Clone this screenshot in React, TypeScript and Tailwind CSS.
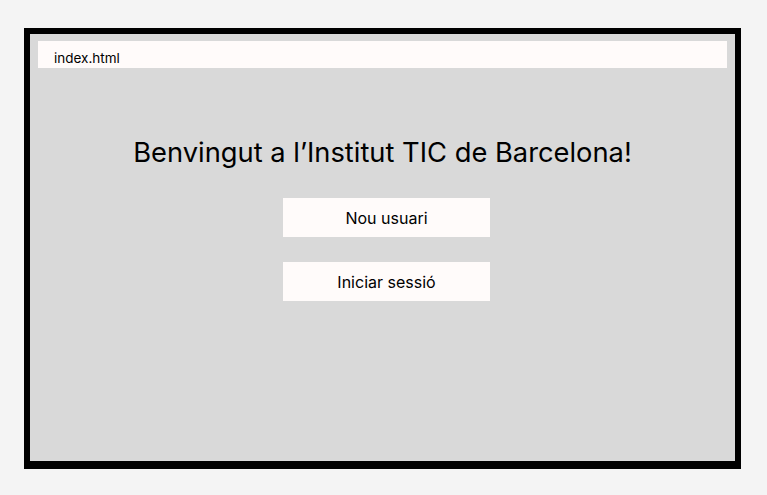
export default function App() {
  return (
    <div
      className="w-[767px] h-[495px] bg-[#f4f4f4] pt-[28px] pl-[24px]"
      style={{ fontFamily: 'Inter, "Liberation Sans", sans-serif' }}
    >
      <div className="w-[717px] h-[441px] border-black border-x-[6px] border-t-[6px] border-b-[8px] bg-[#d9d9d9] flex flex-col">
        <div className="mx-[8px] mt-[7px] h-[27px] bg-[#fffbfa] pl-[16px] pt-[9px] text-[13.5px] leading-[16px] text-black">
          index.html
        </div>
        <h1 className="mt-[67px] text-center text-[27.3px] leading-[36px] text-black">
          Benvingut a l&rsquo;Institut TIC de Barcelona!
        </h1>
        <div className="mt-[27px] flex flex-col items-center gap-[25px] pl-[8px]">
          <button className="w-[207px] h-[39px] bg-[#fffbfa] text-[16px] text-black">
            Nou usuari
          </button>
          <button className="w-[207px] h-[39px] bg-[#fffbfa] text-[16px] text-black">
            Iniciar sessió
          </button>
        </div>
      </div>
    </div>
  );
}
